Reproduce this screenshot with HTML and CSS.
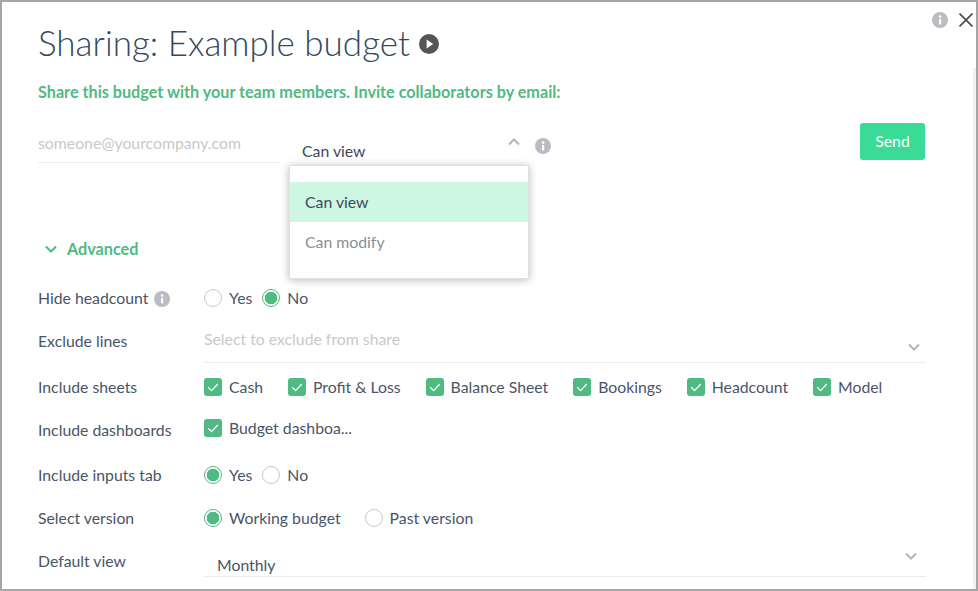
FILE: index.html
```html
<!DOCTYPE html>
<html lang="en">
<head>
<meta charset="utf-8">
<title>Sharing: Example budget</title>
<link rel="stylesheet" href="styles.css">
</head>
<body>
<div class="modal">
  <div class="scroll-track"></div>
  <div class="top-icons">
    <svg class="info info-lg" viewBox="0 0 16 16"><circle cx="8" cy="8" r="8" fill="#b9bcc2"/><rect x="7" y="7" width="2.2" height="5.4" fill="#fff"/><circle cx="8.1" cy="4.6" r="1.3" fill="#fff"/></svg>
    <svg class="close" viewBox="0 0 14 14"><path d="M0.5 0.5 L13.5 13.5 M13.5 0.5 L0.5 13.5" stroke="#4a4a4a" stroke-width="1.6" fill="none"/></svg>
  </div>
  <h1 class="title">Sharing: Example budget
    <svg class="play" viewBox="0 0 20 20"><circle cx="10" cy="10" r="10" fill="#555"/><path d="M7.6 5.6 L14.2 10 L7.6 14.4 Z" fill="#fff"/></svg>
  </h1>
  <p class="lead">Share this budget with your team members. Invite collaborators by email:</p>
  <div class="invite">
    <div class="email">someone@yourcompany.com</div>
    <div class="perm">
      <span class="perm-value">Can view</span>
      <svg class="chev chev-up" viewBox="0 0 12 8"><path d="M1 6.5 L6 1.5 L11 6.5" stroke="#b4b4b4" stroke-width="2" fill="none"/></svg>
      <svg class="info info-lg perm-info" viewBox="0 0 16 16"><circle cx="8" cy="8" r="8" fill="#b9bcc2"/><rect x="7" y="7" width="2.2" height="5.4" fill="#fff"/><circle cx="8.1" cy="4.6" r="1.3" fill="#fff"/></svg>
      <div class="menu">
        <div class="menu-item selected">Can view</div>
        <div class="menu-item">Can modify</div>
      </div>
    </div>
    <button class="send">Send</button>
  </div>
  <div class="advanced">
    <svg class="adv-chev" viewBox="0 0 12 8"><path d="M1 1.5 L6 6.5 L11 1.5" stroke="#4fba82" stroke-width="2" fill="none"/></svg>
    <span>Advanced</span>
    <span class="hidden-radio"></span>
  </div>
  <div class="row row-headcount">
    <div class="label">Hide headcount <svg class="info info-sm" viewBox="0 0 16 16"><circle cx="8" cy="8" r="8" fill="#b9bcc2"/><rect x="7" y="7" width="2.2" height="5.4" fill="#fff"/><circle cx="8.1" cy="4.6" r="1.3" fill="#fff"/></svg></div>
    <div class="opts opts-tight">
      <label class="opt"><span class="radio"></span>Yes</label>
      <label class="opt"><span class="radio on"></span>No</label>
    </div>
  </div>
  <div class="row row-exclude">
    <div class="label">Exclude lines</div>
    <div class="select select-exclude">
      <span class="placeholder">Select to exclude from share</span>
      <svg class="chev" viewBox="0 0 12 8"><path d="M1 1.5 L6 6.5 L11 1.5" stroke="#b4b4b4" stroke-width="2" fill="none"/></svg>
    </div>
  </div>
  <div class="row row-sheets">
    <div class="label">Include sheets</div>
    <div class="opts opts-wide">
      <label class="opt"><span class="check"><svg viewBox="0 0 18 18"><path d="M4.2 9.2 L7.6 12.6 L13.8 6" stroke="#fff" stroke-width="1.3" fill="none"/></svg></span>Cash</label>
      <label class="opt"><span class="check"><svg viewBox="0 0 18 18"><path d="M4.2 9.2 L7.6 12.6 L13.8 6" stroke="#fff" stroke-width="1.3" fill="none"/></svg></span>Profit &amp; Loss</label>
      <label class="opt"><span class="check"><svg viewBox="0 0 18 18"><path d="M4.2 9.2 L7.6 12.6 L13.8 6" stroke="#fff" stroke-width="1.3" fill="none"/></svg></span>Balance Sheet</label>
      <label class="opt"><span class="check"><svg viewBox="0 0 18 18"><path d="M4.2 9.2 L7.6 12.6 L13.8 6" stroke="#fff" stroke-width="1.3" fill="none"/></svg></span>Bookings</label>
      <label class="opt"><span class="check"><svg viewBox="0 0 18 18"><path d="M4.2 9.2 L7.6 12.6 L13.8 6" stroke="#fff" stroke-width="1.3" fill="none"/></svg></span>Headcount</label>
      <label class="opt"><span class="check"><svg viewBox="0 0 18 18"><path d="M4.2 9.2 L7.6 12.6 L13.8 6" stroke="#fff" stroke-width="1.3" fill="none"/></svg></span>Model</label>
    </div>
  </div>
  <div class="row row-dash">
    <div class="label">Include dashboards</div>
    <div class="opts">
      <label class="opt"><span class="check"><svg viewBox="0 0 18 18"><path d="M4.2 9.2 L7.6 12.6 L13.8 6" stroke="#fff" stroke-width="1.3" fill="none"/></svg></span>Budget dashboa...</label>
    </div>
  </div>
  <div class="row row-inputs">
    <div class="label">Include inputs tab</div>
    <div class="opts opts-tight">
      <label class="opt"><span class="radio on"></span>Yes</label>
      <label class="opt"><span class="radio"></span>No</label>
    </div>
  </div>
  <div class="row row-version">
    <div class="label">Select version</div>
    <div class="opts opts-version">
      <label class="opt"><span class="radio on"></span>Working budget</label>
      <label class="opt"><span class="radio"></span>Past version</label>
    </div>
  </div>
  <div class="row row-default">
    <div class="label">Default view</div>
    <div class="select select-default">
      <span class="select-value">Monthly</span>
      <svg class="chev" viewBox="0 0 12 8"><path d="M1 1.5 L6 6.5 L11 1.5" stroke="#b4b4b4" stroke-width="2" fill="none"/></svg>
    </div>
  </div>
</div>
</body>
</html>
```
FILE: styles.css
```css
* { box-sizing: border-box; }
html, body { margin: 0; height: 100%; overflow: hidden; }
body { background: #fff; font-family: "Lato", "Noto Sans", sans-serif; font-size: 15.8px; color: #4a5568; }
.modal { position: relative; width: 978px; height: 591px; background: #fff; border: 2px solid #a6a6a6; padding: 0 50px 0 36px; overflow: hidden; }
.scroll-track { position: absolute; right: 0; top: 66px; bottom: 0; width: 3px; background: #f1f1f1; }
.top-icons { position: absolute; top: 10px; right: 3px; display: flex; align-items: center; gap: 11px; }
.info { display: block; flex: none; }
.info-lg { width: 16px; height: 16px; }
.info-sm { width: 16px; height: 16px; display: inline-block; vertical-align: -3px; margin-left: 2px; }
.close { width: 14px; height: 14px; }
.title { margin: 0; padding-top: 17px; height: 63px; font-weight: 300; font-size: 35px; line-height: 43px; color: #34495e; display: flex; align-items: center; gap: 9px; }
.play { width: 20px; height: 20px; margin-top: 4px; }
.lead { margin: 18px 0 0; font-weight: 700; font-size: 16.2px; line-height: 18px; color: #4fba82; }
.invite { display: flex; align-items: flex-start; margin-top: 23px; height: 58px; }
.email { width: 242px; height: 39px; padding-top: 9px; line-height: 20px; color: #c9c9c9; border-bottom: 1px solid #ececec; }
.perm { position: relative; flex: 1; padding: 17px 0 0 22px; display: flex; }
.perm-value { position: relative; z-index: 6; line-height: 20px; color: #3c4a5c; }
.chev { display: block; width: 12px; height: 8px; }
.chev-up { position: absolute; left: 228px; top: 14px; }
.perm-info { position: absolute; left: 255px; top: 14px; }
.menu { position: absolute; left: 9px; top: 41px; width: 240px; height: 114px; padding: 16px 0; background: #fff; border: 1px solid #e0e0e0; box-shadow: 0 1px 8px rgba(0,0,0,.28), 0 0 0 9px #fff; z-index: 5; }
.menu-item { height: 40px; padding-left: 15px; line-height: 40px; color: #8a8f97; }
.menu-item.selected { background: #cdf6e3; color: #3c4a5c; }
.send { flex: none; width: 65px; height: 37px; margin-top: -1px; margin-right: 1px; border: 0; border-radius: 3px; background: #39db96; color: #fff; font: inherit; padding: 0 0 2px; }
.advanced { position: relative; display: flex; align-items: center; gap: 10px; margin-top: 56px; padding-left: 7px; height: 20px; font-weight: 700; font-size: 16.2px; color: #4fba82; }
.hidden-radio { position: absolute; left: 242px; top: 1px; width: 18px; height: 18px; border-radius: 50%; border: 1px solid #4fba82; }
.adv-chev { width: 12px; height: 8px; margin-top: 2px; }
.row { display: flex; align-items: center; }
.label { width: 166px; flex: none; color: #4a5568; padding: 0 0 2px; }
.opts { display: flex; align-items: center; }
.opts-tight { gap: 10px; }
.opts-wide { gap: 24.9px; }
.opts-version { gap: 24px; }
.opt { display: flex; align-items: center; gap: 7px; color: #4a5568; padding-bottom: 2px; }
.radio { width: 18px; height: 18px; border-radius: 50%; border: 1px solid #c8c8c8; background: #fff; flex: none; margin-top: 2px; }
.radio.on { border-color: #4fba82; background: radial-gradient(circle, #4fba82 0 6px, #fff 6.6px); }
.check { width: 18px; height: 18px; border-radius: 3px; background: #4fba82; flex: none; margin-top: 2px; }
.check svg { display: block; width: 18px; height: 18px; }
.select { flex: 1; position: relative; border-bottom: 1px solid #ececec; }
.placeholder { color: #c9c9c9; }
.select .chev { position: absolute; }
.row-headcount { margin-top: 30px; height: 20px; }
.row-exclude { margin-top: 24px; height: 20px; align-items: flex-start; }
.row-exclude .label, .row-default .label { margin-top: -1px; }
.select-exclude { height: 41px; margin-top: -10px; padding-top: 7px; line-height: 20px; }
.select-exclude .chev { right: 6px; top: 21px; }
.row-sheets { margin-top: 25px; height: 20px; }
.row-dash { margin-top: 21px; height: 20px; }
.row-dash .label { padding-top: 4px; }
.row-inputs { margin-top: 27px; height: 20px; }
.row-version { margin-top: 23px; height: 20px; }
.row-default { margin-top: 24px; height: 20px; align-items: flex-start; }
.select-default { height: 31px; margin-top: -6px; padding: 9px 0 0 13px; line-height: 20px; color: #4a5568; }
.select-default .chev { right: 9px; top: 6px; }
```
